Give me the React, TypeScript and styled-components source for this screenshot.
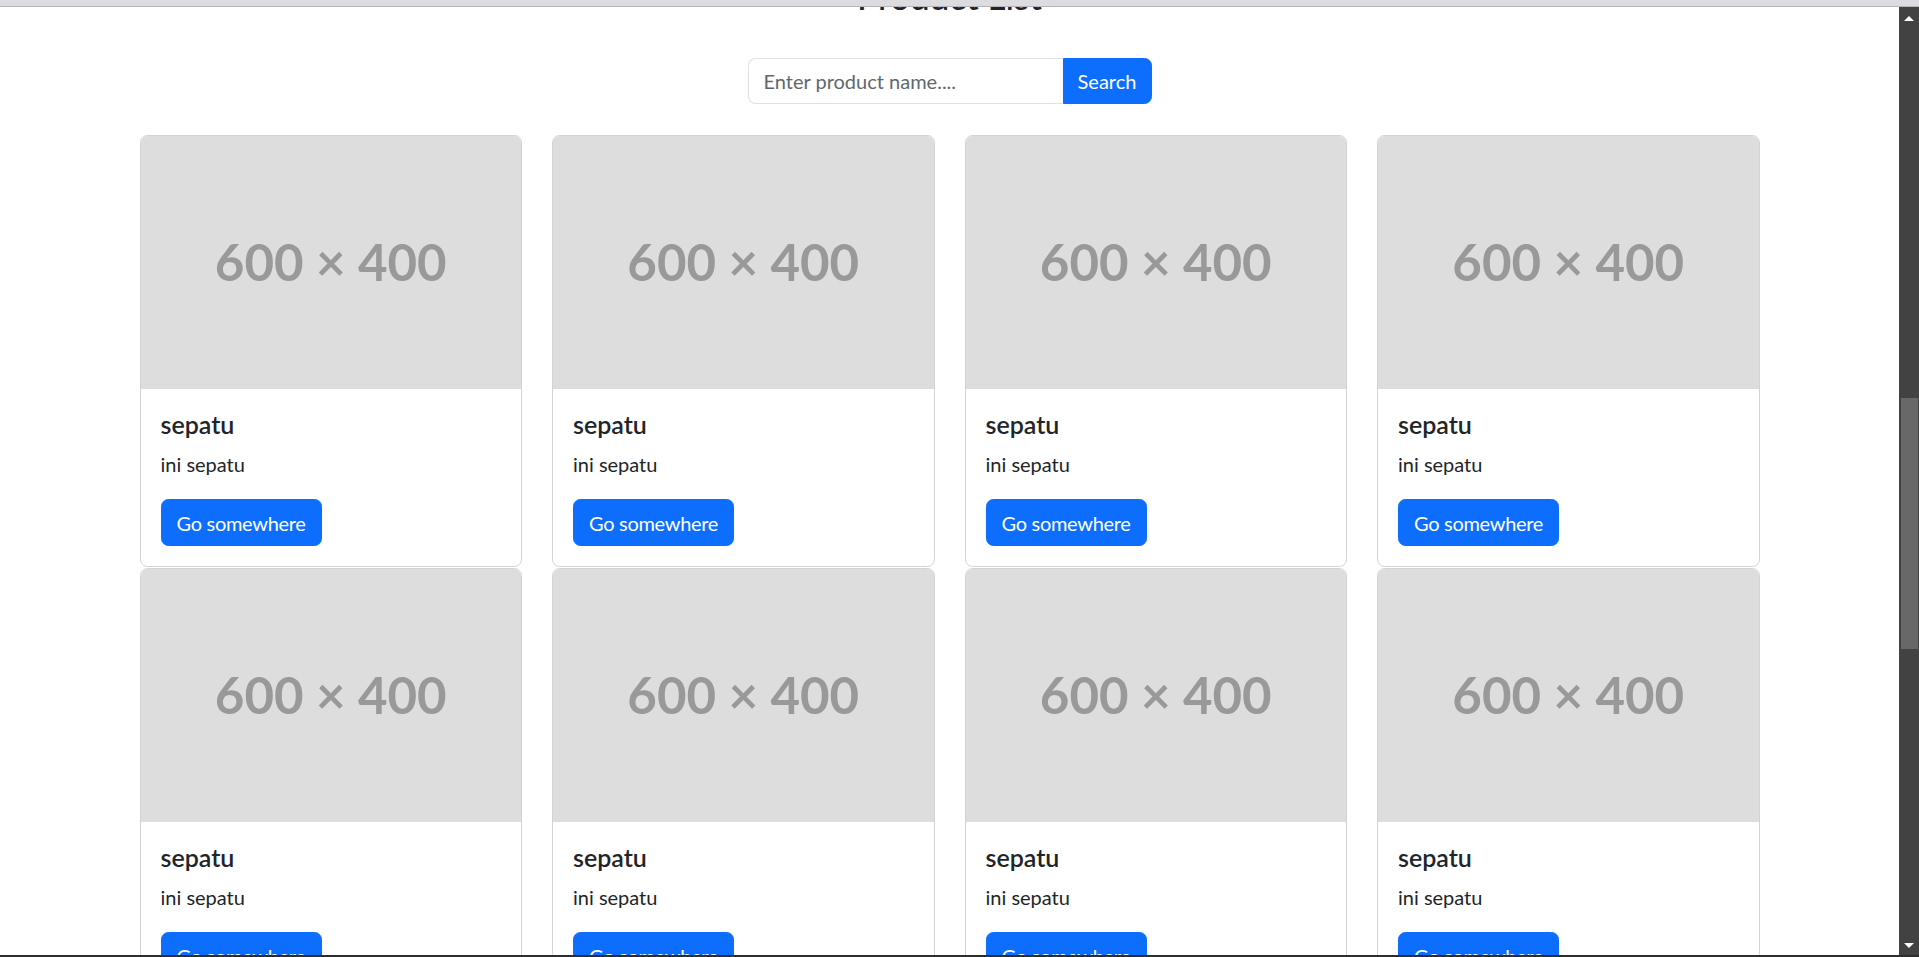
import React from "react";
import styled, { createGlobalStyle } from "styled-components";

const GlobalStyle = createGlobalStyle`
  html, body {
    margin: 0;
    padding: 0;
    background: #ffffff;
    overflow: hidden;
  }
  * {
    box-sizing: border-box;
  }
`;

const products = Array.from({ length: 8 }, (_, i) => ({
  id: i + 1,
  name: "sepatu",
  description: "ini sepatu",
}));

const App: React.FC = () => {
  return (
    <>
      <GlobalStyle />
      <WindowStyled>
        <ChromeStripStyled />
        <ViewportStyled>
          <PageStyled>
            <HeadingStyled>Product List</HeadingStyled>
            <SearchGroupStyled>
              <SearchInputStyled placeholder="Enter product name...." />
              <SearchButtonStyled>Search</SearchButtonStyled>
            </SearchGroupStyled>
            <ProductGridStyled>
              {products.map((p) => (
                <CardStyled key={p.id}>
                  <PlaceholderStyled>600 × 400</PlaceholderStyled>
                  <CardBodyStyled>
                    <CardTitleStyled>{p.name}</CardTitleStyled>
                    <CardTextStyled>{p.description}</CardTextStyled>
                    <PrimaryButtonStyled>Go somewhere</PrimaryButtonStyled>
                  </CardBodyStyled>
                </CardStyled>
              ))}
            </ProductGridStyled>
          </PageStyled>
          <ScrollbarStyled>
            <ScrollArrowStyled direction="up" />
            <ScrollTrackStyled>
              <ScrollThumbStyled />
            </ScrollTrackStyled>
            <ScrollArrowStyled direction="down" />
          </ScrollbarStyled>
        </ViewportStyled>
        <TaskbarEdgeStyled />
      </WindowStyled>
    </>
  );
};

export default App;

const WindowStyled = styled.div({
  width: 1919,
  height: 957,
  display: "flex",
  flexDirection: "column",
  overflow: "hidden",
  fontFamily: "Lato, 'Noto Sans', sans-serif",
  color: "#212529",
});

const ChromeStripStyled = styled.div({
  height: 7,
  flexShrink: 0,
  background: "#dcdce0",
  borderBottom: "1px solid #b4b4bc",
});

const ViewportStyled = styled.div({
  flex: 1,
  display: "flex",
  minHeight: 0,
});

const PageStyled = styled.main({
  flex: 1,
  overflow: "hidden",
  display: "flex",
  flexDirection: "column",
  alignItems: "center",
});

const HeadingStyled = styled.h3({
  margin: "-32px 0 0",
  fontSize: 35,
  fontWeight: 500,
  lineHeight: 1.2,
  textAlign: "center",
});

const SearchGroupStyled = styled.div({
  display: "flex",
  marginTop: 41,
  width: 404,
  height: 47,
});

const SearchInputStyled = styled.input({
  flex: 1,
  minWidth: 0,
  fontFamily: "inherit",
  fontSize: 20,
  lineHeight: 1.5,
  padding: "7px 15px",
  color: "#212529",
  border: "1px solid #dee2e6",
  borderRight: "none",
  borderRadius: "7.5px 0 0 7.5px",
  outline: "none",
  "&::placeholder": {
    color: "#62676c",
  },
});

const SearchButtonStyled = styled.button({
  width: 89,
  fontFamily: "inherit",
  fontSize: 20,
  lineHeight: 1.5,
  color: "#ffffff",
  background: "#0d6efd",
  border: "1px solid #0d6efd",
  borderRadius: "0 7.5px 7.5px 0",
  padding: "7px 12px",
});

const ProductGridStyled = styled.section({
  width: 1620,
  marginTop: 31,
  display: "grid",
  gridTemplateColumns: "repeat(4, 1fr)",
  columnGap: 30,
  rowGap: 1,
});

const CardStyled = styled.article({
  border: "1px solid #d3d3d3",
  borderRadius: 7.5,
  overflow: "hidden",
  background: "#ffffff",
});

const PlaceholderStyled = styled.div({
  height: 253,
  paddingBottom: 2,
  background: "#dddddd",
  color: "#999999",
  fontSize: 51,
  fontWeight: 700,
  display: "flex",
  alignItems: "center",
  justifyContent: "center",
});

const CardBodyStyled = styled.div({
  padding: 20,
});

const CardTitleStyled = styled.h5({
  margin: "0 0 10px",
  fontSize: 25,
  fontWeight: 600,
  lineHeight: 1.2,
});

const CardTextStyled = styled.p({
  margin: "0 0 20px",
  fontSize: 20,
  lineHeight: 1.5,
});

const PrimaryButtonStyled = styled.button({
  fontFamily: "inherit",
  fontSize: 20,
  lineHeight: 1.5,
  letterSpacing: -0.3,
  color: "#ffffff",
  background: "#0d6efd",
  border: "1px solid #0d6efd",
  borderRadius: 7.5,
  padding: "7.5px 15px",
});

const ScrollbarStyled = styled.aside({
  width: 20,
  flexShrink: 0,
  background: "#424242",
  display: "flex",
  flexDirection: "column",
  alignItems: "center",
});

const ScrollArrowStyled = styled.div<{ direction: "up" | "down" }>(
  ({ direction }) => ({
    width: 0,
    height: 0,
    margin: direction === "up" ? "9px 0 0" : "0 0 7px",
    borderLeft: "5px solid transparent",
    borderRight: "5px solid transparent",
    [direction === "up" ? "borderBottom" : "borderTop"]: "5px solid #ffffff",
  })
);

const ScrollTrackStyled = styled.div({
  flex: 1,
  width: "100%",
  paddingTop: 377,
});

const ScrollThumbStyled = styled.div({
  width: 17,
  height: 251,
  marginLeft: 2,
  background: "#686868",
});

const TaskbarEdgeStyled = styled.div({
  height: 2,
  flexShrink: 0,
  background: "#2e2e2e",
});
